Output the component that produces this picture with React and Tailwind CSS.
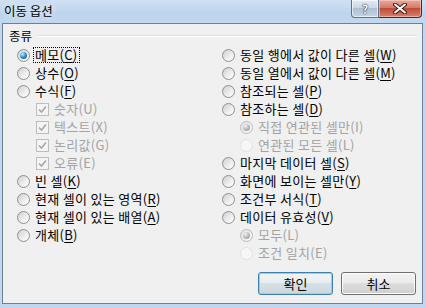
const leftRows = [
  { label: "메모", key: "C", checked: true, focus: true },
  { label: "상수", key: "O" },
  { label: "수식", key: "F" },
  { label: "숫자", key: "U", box: true },
  { label: "텍스트", key: "X", box: true },
  { label: "논리값", key: "G", box: true },
  { label: "오류", key: "E", box: true },
  { label: "빈 셀", key: "K" },
  { label: "현재 셀이 있는 영역", key: "R" },
  { label: "현재 셀이 있는 배열", key: "A" },
  { label: "개체", key: "B" },
];

const rightRows = [
  { label: "동일 행에서 값이 다른 셀", key: "W" },
  { label: "동일 열에서 값이 다른 셀", key: "M" },
  { label: "참조되는 셀", key: "P" },
  { label: "참조하는 셀", key: "D" },
  { label: "직접 연관된 셀만", key: "I", sub: true, disabled: true, checked: true },
  { label: "연관된 모든 셀", key: "L", sub: true, disabled: true },
  { label: "마지막 데이터 셀", key: "S" },
  { label: "화면에 보이는 셀만", key: "Y" },
  { label: "조건부 서식", key: "T" },
  { label: "데이터 유효성", key: "V" },
  { label: "모두", key: "L", sub: true, disabled: true, checked: true },
  { label: "조건 일치", key: "E", sub: true, disabled: true },
];

function Radio({ checked, disabled }) {
  if (disabled) {
    return (
      <span
        className={`w-[13px] h-[13px] shrink-0 rounded-full border flex items-center justify-center ${
          checked
            ? "border-[#b9b9b9] bg-[linear-gradient(135deg,#e2e2e2,#fbfbfb)]"
            : "border-[#e2e2e2] bg-[#f6f6f6]"
        }`}
      >
        {checked && (
          <span className="w-[7px] h-[7px] rounded-full bg-[radial-gradient(circle_at_35%_30%,#f2f2f2,#b4b4b4_55%,#9a9a9a)]" />
        )}
      </span>
    );
  }
  return (
    <span className="w-[13px] h-[13px] shrink-0 rounded-full border border-[#8e8f8f] bg-[linear-gradient(135deg,#cfcfcf,#f4f4f4_70%,#ffffff)] flex items-center justify-center">
      {checked && (
        <span className="w-[7px] h-[7px] rounded-full bg-[radial-gradient(circle_at_35%_30%,#c9efff,#2f8ad6_50%,#0f4d8c)]" />
      )}
    </span>
  );
}

function CheckBox() {
  return (
    <span className="w-[13px] h-[13px] shrink-0 border border-[#bdbdbd] bg-[#f4f4f4] flex items-center justify-center">
      <svg width="9" height="9" viewBox="0 0 9 9">
        <path d="M1 4.5 L3.5 7 L8 1.5" fill="none" stroke="#a8a8a8" strokeWidth="1.6" />
      </svg>
    </span>
  );
}

function Label({ text, k, disabled, focus }) {
  return (
    <span
      className={`px-[1px] leading-[14px] tracking-[0.3px] border ${
        focus ? "border-dotted border-black" : "border-transparent"
      } ${disabled ? "text-[#a3a3a3]" : "text-black"}`}
    >
      {text}(
      {disabled ? k : <span className="underline underline-offset-2">{k}</span>})
    </span>
  );
}

function Row({ r }) {
  const disabled = r.box || r.disabled;
  return (
    <div className={`h-[18px] flex items-center gap-[3px] ${r.box ? "pl-[19px]" : r.sub ? "pl-[18px]" : ""}`}>
      {r.box ? <CheckBox /> : <Radio checked={r.checked} disabled={r.disabled} />}
      <Label text={r.label} k={r.key} disabled={disabled} focus={r.focus} />
    </div>
  );
}

export default function App() {
  return (
    <div className="w-[426px] h-[308px] flex flex-col bg-[#c2d7ef] font-['Noto_Sans_CJK_KR','Malgun_Gothic',sans-serif] text-[13px] overflow-hidden">
      {/* title bar */}
      <div className="h-[23px] shrink-0 flex items-start justify-between bg-[linear-gradient(180deg,#cfe0f3,#bdd4ed_60%,#c3d8ef)]">
        <span className="pl-[4px] pt-[3px] leading-[16px] text-[12.5px] text-black [text-shadow:0_0_6px_#ffffff]">
          이동 옵션
        </span>
        <div className="flex mr-[4px]">
          <div className="w-[28px] h-[18px] rounded-bl-[4px] border border-t-0 border-[#5f7287] bg-[linear-gradient(180deg,#e3ecf5,#c9d7e6_45%,#aebfd2_50%,#c6d5e5)] flex items-center justify-center shadow-[inset_0_0_0_1px_rgba(255,255,255,0.6)]">
            <span className="text-[12px] leading-none font-bold text-white [text-shadow:0_0_1px_#2d3c4f,0_0_1px_#2d3c4f,0_0_1px_#2d3c4f]">?</span>
          </div>
          <div className="w-[43px] h-[18px] rounded-br-[4px] border border-l-0 border-t-0 border-[#5a2520] bg-[linear-gradient(180deg,#e9a99c,#d27b6b_45%,#c24a37_50%,#d5826e)] flex items-center justify-center shadow-[inset_0_0_0_1px_rgba(255,220,210,0.5)]">
            <svg width="14" height="11" viewBox="0 0 14 11">
              <path d="M2 1.5 L12 9.5 M12 1.5 L2 9.5" stroke="#3b1a16" strokeWidth="4" strokeLinecap="round" />
              <path d="M2 1.5 L12 9.5 M12 1.5 L2 9.5" stroke="#ffffff" strokeWidth="2" strokeLinecap="round" />
            </svg>
          </div>
        </div>
      </div>

      {/* client area */}
      <div className="h-[281px] shrink-0 ml-[2px] mr-[3px] border border-[#6c8096] bg-[#f0f0f0] flex flex-col">
        <div className="h-[22px] flex items-center pl-[6px] pr-[5px] pt-[2px]">
          <span className="leading-[14px] text-[12.5px] text-black">종류</span>
          <div className="flex-1 ml-[5px] border-t border-[#d5dfe5] border-b-white border-b h-[2px]" />
        </div>
        <div className="grid grid-cols-[205px_1fr] pl-[14px]">
          <div className="flex flex-col">
            {leftRows.map((r, i) => (
              <Row key={i} r={r} />
            ))}
          </div>
          <div className="flex flex-col">
            {rightRows.map((r, i) => (
              <Row key={i} r={r} />
            ))}
          </div>
        </div>
        <div className="flex justify-end gap-[8px] pr-[6px] mt-[10px]">
          <button className="w-[75px] h-[23px] rounded-[3px] border border-[#3c7fb1] bg-[linear-gradient(180deg,#f1f5f8,#e7edf1_45%,#d6e0e7_50%,#cbd7df)] shadow-[inset_0_0_0_1px_#8fd3f3] text-black leading-none">
            확인
          </button>
          <button className="w-[75px] h-[23px] rounded-[3px] border border-[#707070] bg-[linear-gradient(180deg,#f2f2f2,#ebebeb_45%,#dddddd_50%,#cfcfcf)] shadow-[inset_0_0_0_1px_#fcfcfc] text-black leading-none">
            취소
          </button>
        </div>
      </div>
    </div>
  );
}
